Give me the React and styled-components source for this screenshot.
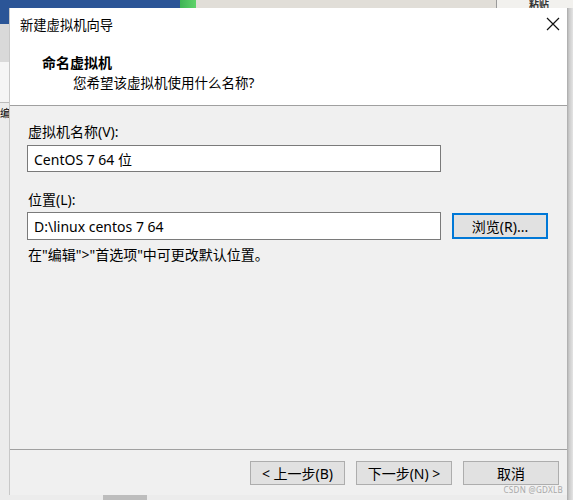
import styled, { createGlobalStyle } from "styled-components";

const GlobalStyle = createGlobalStyle`
  html, body { margin: 0; padding: 0; }
  body {
    width: 573px;
    height: 500px;
    overflow: hidden;
    font-family: "Noto Sans", "Noto Sans CJK SC", sans-serif;
    font-size: 13px;
    color: #000;
  }
`;

const Screen = styled.div`
  width: 573px;
  height: 500px;
  display: grid;
  grid-template-columns: 10px 557px 6px;
  grid-template-rows: 8px 487px 5px;
  background: #e6e6e6;
`;

const TopStrip = styled.div`
  grid-column: 1 / 4;
  grid-row: 1;
  display: flex;
  overflow: hidden;
`;

const StripPart = styled.div`
  width: ${(p) => p.w || "auto"};
  flex: ${(p) => (p.w ? "none" : 1)};
  background: ${(p) => p.bg};
  border-right: ${(p) => p.edge || "none"};
`;

const PasteLabel = styled.div`
  width: 76px;
  background: #f2f1ee;
  font-size: 10px;
  font-weight: bold;
  line-height: 8px;
  text-align: center;
  color: #333;
  padding-left: 8px;
  box-sizing: border-box;
`;

const LeftStrip = styled.div`
  grid-column: 1;
  grid-row: 2 / 4;
  display: flex;
  flex-direction: column;
  background: #ececec;
  overflow: hidden;
`;

const LeftPiece = styled.div`
  height: ${(p) => p.h}px;
  background: ${(p) => p.bg};
  border-bottom: ${(p) => p.edge || "none"};
  font-size: 10px;
  line-height: ${(p) => p.h}px;
`;

const RightShadow = styled.div`
  grid-column: 3;
  grid-row: 2 / 4;
  background: linear-gradient(to right, #a9a9a9 0px, #c9c9c9 2px, #e4e4e4 6px);
`;

const BottomStrip = styled.div`
  grid-column: 2;
  grid-row: 3;
  display: flex;
  padding-left: 93px;
  background: #ececec;
`;

const BottomTab = styled.div`
  width: 44px;
  background: #bdbdbd;
`;

const Dialog = styled.div`
  grid-column: 2;
  grid-row: 2;
  position: relative;
  display: flex;
  flex-direction: column;
  background: #f0f0f0;
  box-shadow: -1px 0 0 #c8c8c8;
`;

const Header = styled.div`
  height: 98px;
  background: #fff;
  border-bottom: 1px solid #a0a0a0;
  display: flex;
  flex-direction: column;
  box-sizing: border-box;
`;

const TitleBar = styled.div`
  display: flex;
  align-items: center;
  justify-content: space-between;
  height: 32px;
  padding: 0 7px 0 10px;
`;

const Title = styled.span`
  font-size: 13.3px;
`;

const CloseBtn = styled.div`
  width: 14px;
  height: 14px;
  display: flex;
  margin-top: -1px;
`;

const PageTitle = styled.div`
  margin: 13px 0 0 32px;
  font-size: 14px;
  font-weight: bold;
  line-height: 20px;
`;

const PageSub = styled.div`
  margin-left: 63px;
  font-size: 13.5px;
  line-height: 20px;
`;

const Body = styled.div`
  flex: 1;
  padding: 17px 0 0 17px;
  display: flex;
  flex-direction: column;
  font-size: 14px;
`;

const Label = styled.div`
  line-height: 18px;
  padding-left: 1px;
  margin-top: ${(p) => p.top || 0}px;
`;

const Row = styled.div`
  display: flex;
  align-items: center;
  gap: 11px;
  margin-top: ${(p) => p.top || 0}px;
`;

const TextBox = styled.div`
  width: 414px;
  height: ${(p) => p.h || 27}px;
  box-sizing: border-box;
  border: 1px solid #7a7a7a;
  background: #fff;
  padding-left: 6px;
  display: flex;
  align-items: center;
  font-size: 14px;
`;

const Button = styled.div`
  width: ${(p) => p.w || 95}px;
  height: ${(p) => p.h || 24}px;
  box-sizing: border-box;
  border: ${(p) => (p.focus ? "2px solid #0078d7" : "1px solid #adadad")};
  background: #e1e1e1;
  display: flex;
  align-items: center;
  justify-content: center;
  font-size: 14px;
`;

const Hint = styled.div`
  margin-top: 6px;
  line-height: 18px;
  padding-left: 1px;
`;

const Footer = styled.div`
  height: 46px;
  border-top: 1px solid #a0a0a0;
  display: flex;
  justify-content: flex-end;
  gap: 11px;
  padding: 11px 8px 0 0;
  box-sizing: border-box;
`;

const Watermark = styled.div`
  position: absolute;
  right: 4px;
  bottom: 0;
  font-size: 8px;
  color: #a8a8a8;
  letter-spacing: 0.3px;
`;

export default function App() {
  return (
    <>
      <GlobalStyle />
      <Screen>
        <TopStrip>
          <StripPart w="180px" bg="#2b5597" />
          <StripPart w="16px" bg="linear-gradient(to right, #3db455, #5fd36a)" />
          <StripPart bg="#e1ded8" edge="1px solid #9a9a9a" />
          <PasteLabel>粘贴</PasteLabel>
        </TopStrip>
        <LeftStrip>
          <LeftPiece h={16} bg="#2b5597" />
          <LeftPiece h={38} bg="#d9d9d9" />
          <LeftPiece h={40} bg="#f5f5f5" edge="1px solid #bbb" />
          <LeftPiece h={20} bg="#ececec">编</LeftPiece>
        </LeftStrip>
        <Dialog>
          <Header>
            <TitleBar>
              <Title>新建虚拟机向导</Title>
              <CloseBtn>
                <svg width="14" height="14" viewBox="0 0 14 14">
                  <path d="M1 1 L13 13 M13 1 L1 13" stroke="#111" strokeWidth="1.2" />
                </svg>
              </CloseBtn>
            </TitleBar>
            <PageTitle>命名虚拟机</PageTitle>
            <PageSub>您希望该虚拟机使用什么名称?</PageSub>
          </Header>
          <Body>
            <Label>虚拟机名称(V):</Label>
            <Row top={4}>
              <TextBox>CentOS 7 64 位</TextBox>
            </Row>
            <Label top={19}>位置(L):</Label>
            <Row top={3}>
              <TextBox h={28}>D:\linux centos 7 64</TextBox>
              <Button focus w={96} h={26}>浏览(R)...</Button>
            </Row>
            <Hint>在"编辑"&gt;"首选项"中可更改默认位置。</Hint>
          </Body>
          <Footer>
            <Button>&lt; 上一步(B)</Button>
            <Button w={96}>下一步(N) &gt;</Button>
            <Button w={96}>取消</Button>
          </Footer>
          <Watermark>CSDN @GDXLB</Watermark>
        </Dialog>
        <RightShadow />
        <BottomStrip>
          <BottomTab />
        </BottomStrip>
      </Screen>
    </>
  );
}
